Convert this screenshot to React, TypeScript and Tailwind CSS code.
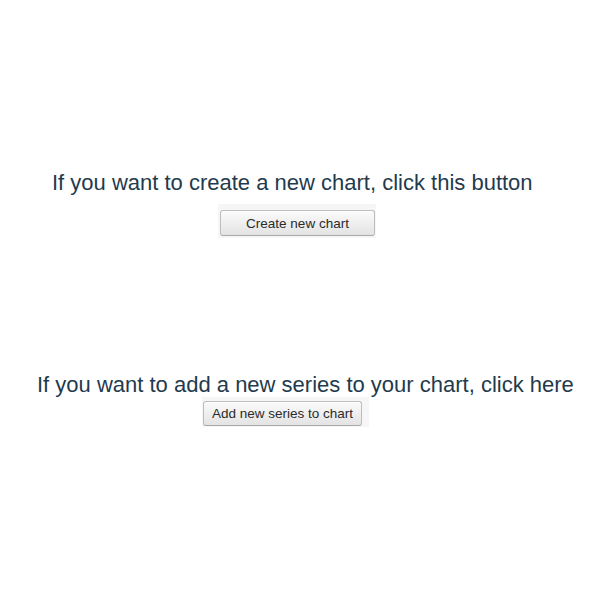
import React from "react";

// Gray-gradient button, as in old desktop-style forms
function ChartButton({ label, className = "" }: { label: string; className?: string }) {
  return (
    <button
      type="button"
      className={`flex items-center justify-center rounded-[3px] border border-[#bdbdbd] border-b-[#a9a9a9] bg-gradient-to-b from-[#fbfbfb] to-[#e3e3e3] pt-[1px] text-[13.5px] leading-none text-[#2b2b2b] shadow-[inset_0_1px_0_#ffffff] ${className}`}
    >
      {label}
    </button>
  );
}

export default function App() {
  return (
    <div className="w-[600px] h-[600px] bg-white font-['Liberation_Sans',Arial,sans-serif] overflow-hidden">
      {/* Create chart section */}
      <div className="pt-[170px]">
        <p className="pl-[52px] text-[22px] leading-[26px] text-[#1f3b4d] whitespace-nowrap">
          If you want to create a new chart, click this button
        </p>
        <div className="mt-[8px] ml-[218px] w-[158px] h-[34px] bg-[#f6f6f6] pt-[6px] pl-[2px]">
          <ChartButton label="Create new chart" className="w-[155px] h-[26px]" />
        </div>
      </div>

      {/* Add series section */}
      <div className="pt-[133px]">
        <p className="pt-[2px] pl-[37px] text-[22px] leading-[24px] text-[#1f3b4d] whitespace-nowrap">
          If you want to add a new series to your chart, click here
        </p>
        <div className="ml-[202px] w-[167px] h-[30px] bg-[#f6f6f6] pt-[4px] pl-[1px]">
          <ChartButton label="Add new series to chart" className="w-[159px] h-[25px]" />
        </div>
      </div>
    </div>
  );
}
